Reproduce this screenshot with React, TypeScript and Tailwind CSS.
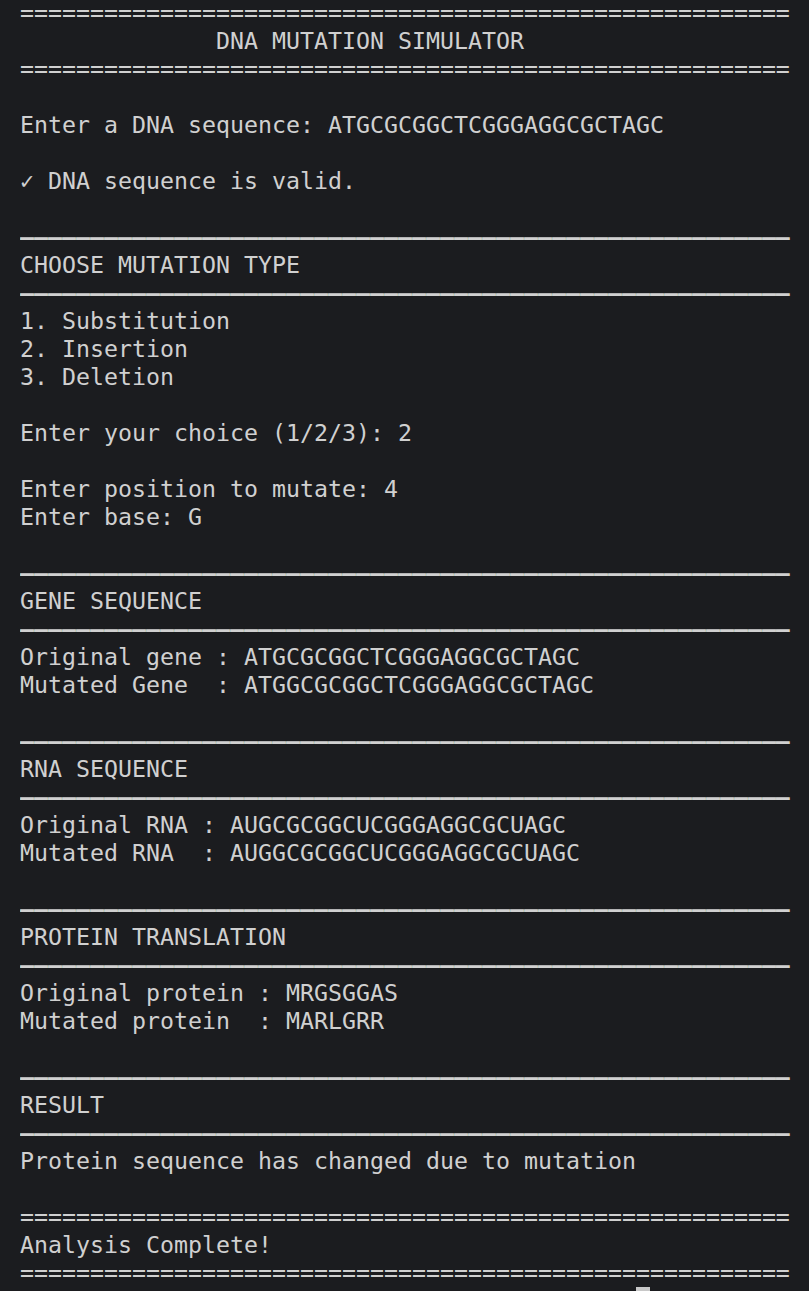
const EQ = "=".repeat(55);
const DASH = "—".repeat(55);

const lines: string[] = [
  EQ,
  "              DNA MUTATION SIMULATOR",
  EQ,
  "",
  "Enter a DNA sequence: ATGCGCGGCTCGGGAGGCGCTAGC",
  "",
  "✓ DNA sequence is valid.",
  "",
  DASH,
  "CHOOSE MUTATION TYPE",
  DASH,
  "1. Substitution",
  "2. Insertion",
  "3. Deletion",
  "",
  "Enter your choice (1/2/3): 2",
  "",
  "Enter position to mutate: 4",
  "Enter base: G",
  "",
  DASH,
  "GENE SEQUENCE",
  DASH,
  "Original gene : ATGCGCGGCTCGGGAGGCGCTAGC",
  "Mutated Gene  : ATGGCGCGGCTCGGGAGGCGCTAGC",
  "",
  DASH,
  "RNA SEQUENCE",
  DASH,
  "Original RNA : AUGCGCGGCUCGGGAGGCGCUAGC",
  "Mutated RNA  : AUGGCGCGGCUCGGGAGGCGCUAGC",
  "",
  DASH,
  "PROTEIN TRANSLATION",
  DASH,
  "Original protein : MRGSGGAS",
  "Mutated protein  : MARLGRR",
  "",
  DASH,
  "RESULT",
  DASH,
  "Protein sequence has changed due to mutation",
  "",
  EQ,
  "Analysis Complete!",
  EQ,
];

export default function App() {
  return (
    <div className="h-screen overflow-hidden bg-[#1b1c1f] text-[#d0d0d0]">
      <div
        className="-mt-px pl-[20px] text-[23.25px] leading-[28px]"
        style={{ fontFamily: '"DejaVu Sans Mono", "Liberation Mono", monospace' }}
      >
        {lines.map((l, i) => (
          <div
            key={i}
            className={`h-[28px] overflow-hidden whitespace-pre ${l === DASH ? "font-bold" : ""}`}
          >
            {l}
          </div>
        ))}
        {/* prompt, mostly below the fold */}
        <div className="flex h-[28px] whitespace-pre">
          <span>(base) users@MacBook-Air DNA_Mutation_Sim % </span>
          <span className="inline-block h-[28px] w-[14px] bg-[#c8c8c8]" />
        </div>
      </div>
    </div>
  );
}
